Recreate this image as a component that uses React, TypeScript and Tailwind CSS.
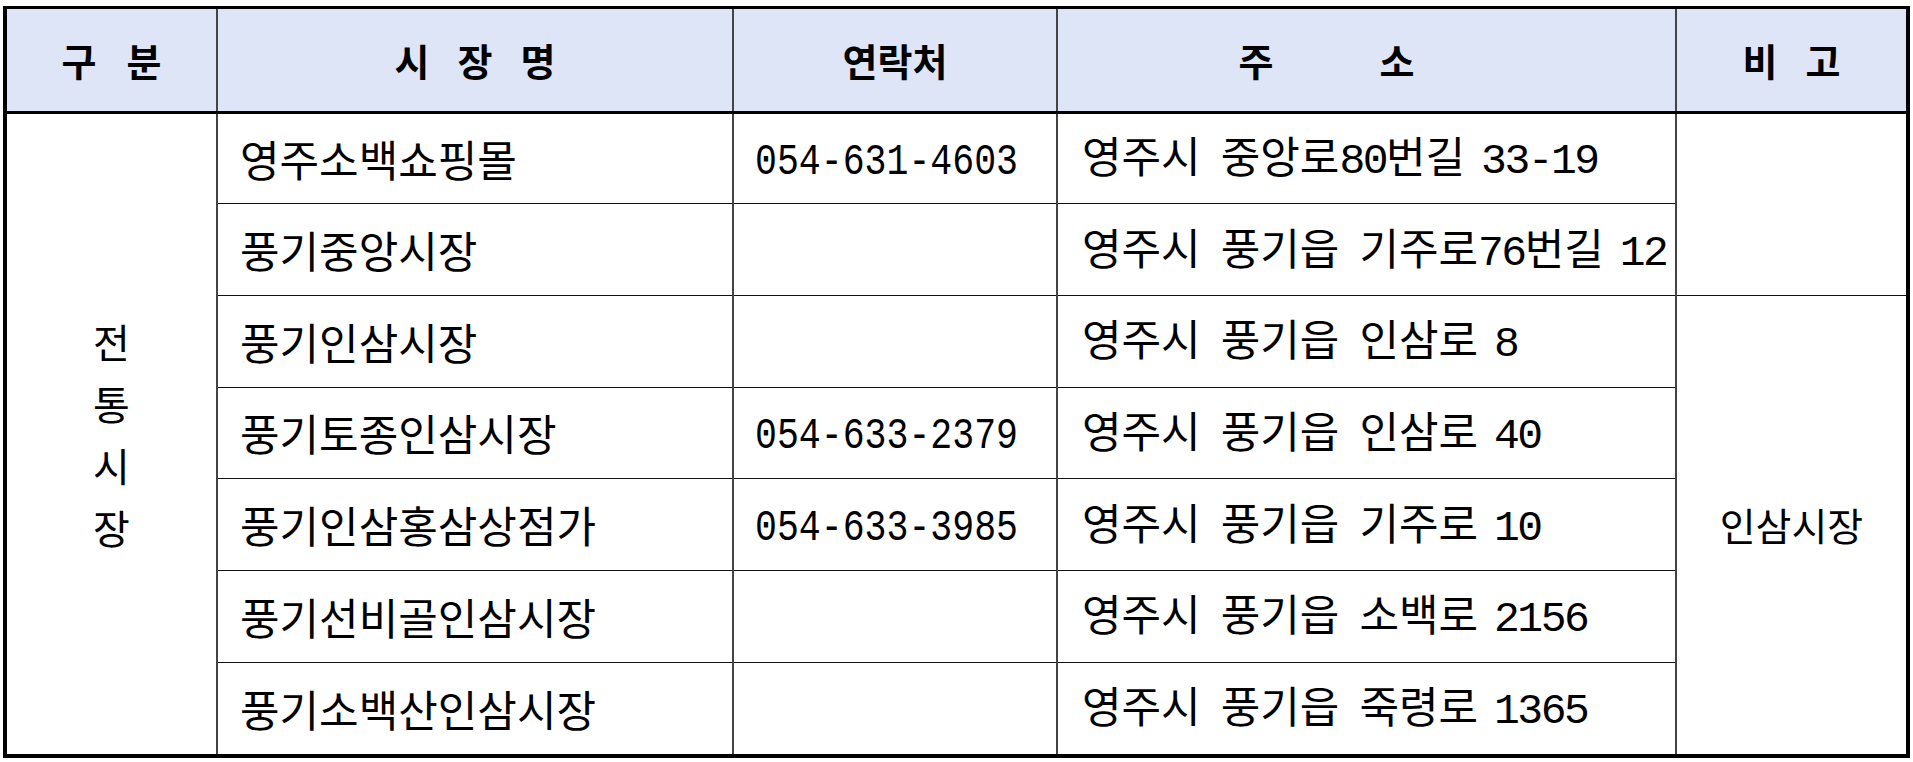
const rows = [
  { name: "영주소백쇼핑몰", tel: "054-631-4603", addr: "영주시 중앙로80번길 33-19" },
  { name: "풍기중앙시장", tel: "", addr: "영주시 풍기읍 기주로76번길 12" },
  { name: "풍기인삼시장", tel: "", addr: "영주시 풍기읍 인삼로 8" },
  { name: "풍기토종인삼시장", tel: "054-633-2379", addr: "영주시 풍기읍 인삼로 40" },
  { name: "풍기인삼홍삼상점가", tel: "054-633-3985", addr: "영주시 풍기읍 기주로 10" },
  { name: "풍기선비골인삼시장", tel: "", addr: "영주시 풍기읍 소백로 2156" },
  { name: "풍기소백산인삼시장", tel: "", addr: "영주시 풍기읍 죽령로 1365" },
]

const font = { fontFamily: '"Noto Sans CJK KR", "Noto Sans", sans-serif' }

const th = "h-[103px] bg-[#dee5f6] border-x-2 border-x-[#444] border-b-[3px] border-b-black p-0 font-bold text-[38px] text-black"

function HeadCell({ chars, gap, extra = "" }: { chars: string[]; gap: string; extra?: string }) {
  return (
    <th className={th + " " + extra}>
      <div className={"flex justify-center items-center " + gap}>
        {chars.map((c, i) => (
          <span key={i}>{c}</span>
        ))}
      </div>
    </th>
  )
}

// digits and dashes sit in a narrow mono face, hangul stays in Noto
function Word({ text }: { text: string }) {
  const parts = text.split(/([0-9][0-9-]*)/)
  return (
    <span>
      {parts.map((p, i) =>
        /^[0-9]/.test(p) ? (
          <span key={i} className="font-['Liberation_Mono'] text-[43px] tracking-[-2.5px]">
            {p}
          </span>
        ) : (
          <span key={i}>{p}</span>
        )
      )}
    </span>
  )
}

function Addr({ text }: { text: string }) {
  const words = text.split(" ")
  return (
    <div className="flex items-baseline whitespace-nowrap">
      {words.map((w, i) => (
        <span key={i} className={i === 0 ? "" : /^[0-9]/.test(w) ? "ml-[16px]" : "ml-[20px]"}>
          <Word text={w} />
        </span>
      ))}
    </div>
  )
}

export default function App() {
  const td = "h-[91.7px] border-y border-y-[#111] border-x-2 border-x-[#444] p-0 text-black leading-none"

  return (
    <div className="min-h-screen bg-white pt-[6px] pl-[3px]" style={font}>
      <div className="w-[1907px] border-x-4 border-t-[3px] border-b-4 border-black">
        <table className="w-full border-collapse border-hidden table-fixed">
          <colgroup>
            <col className="w-[210px]" />
            <col className="w-[516px]" />
            <col className="w-[324px]" />
            <col className="w-[619px]" />
            <col className="w-[230px]" />
          </colgroup>
          <thead>
            <tr>
              <HeadCell chars={["구", "분"]} gap="gap-[30px]" />
              <HeadCell chars={["시", "장", "명"]} gap="gap-[28px]" />
              <HeadCell chars={["연락처"]} gap="" />
              <HeadCell chars={["주", "소"]} gap="gap-[106px]" extra="pr-[80px]" />
              <HeadCell chars={["비", "고"]} gap="gap-[28px]" />
            </tr>
          </thead>
          <tbody>
            {rows.map((r, i) => (
              <tr key={i}>
                {i === 0 && (
                  <td rowSpan={7} className={td + " text-center"}>
                    <div className="flex flex-col items-center text-[40px] leading-[62px]">
                      <span>전</span>
                      <span>통</span>
                      <span>시</span>
                      <span>장</span>
                    </div>
                  </td>
                )}
                <td className={td + " pl-[22px] text-[43px]"}>{r.name}</td>
                <td className={td + " pl-[21px] text-[44px] whitespace-nowrap"}>
                  <span className="inline-block origin-left scale-x-[0.83] font-['Liberation_Mono']">{r.tel}</span>
                </td>
                <td className={td + " pl-[24px] text-[43px]"}>
                  <Addr text={r.addr} />
                </td>
                {i === 0 && <td rowSpan={2} className={td} />}
                {i === 2 && (
                  <td rowSpan={5} className={td + " text-center text-[39px]"}>
                    인삼시장
                  </td>
                )}
              </tr>
            ))}
          </tbody>
        </table>
      </div>
    </div>
  )
}
